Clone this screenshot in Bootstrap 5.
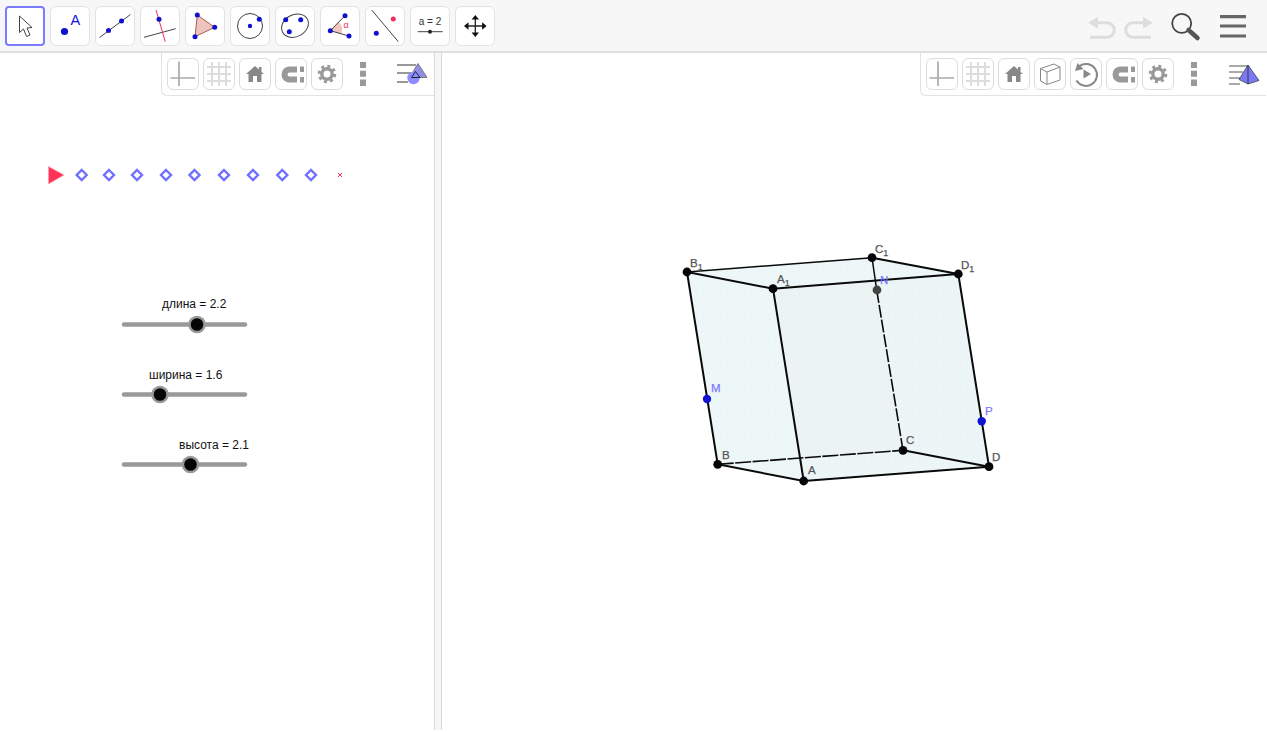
<!DOCTYPE html>
<html lang="ru">
<head>
    <meta charset="UTF-8">
    <meta name="viewport" content="width=device-width, initial-scale=1.0">
    <title>GeoGebra</title>
    <link href="https://cdn.jsdelivr.net/npm/bootstrap@5.3.0/dist/css/bootstrap.min.css" rel="stylesheet">
    <style>
        html, body { height: 100%; overflow: hidden; background: #fff; font-family: "Liberation Sans", Arial, sans-serif; }
        .gg-toolbar { height: 53px; padding: 6px 15px 0 5px; background: #f7f7f7; border-bottom: 2px solid #dfdfdf; }
        .gg-tools { gap: 5px; }
        .gg-tool { width: 40px; height: 40px; padding: 0; background: #fff; border: 1px solid #e3e3e3; border-radius: 6px; }
        .gg-tool:hover { background: #fff; border-color: #e3e3e3; }
        .gg-tool.gg-active, .gg-tool.gg-active:hover { border: 2px solid #7b7bff; border-radius: 4px; }
        .gg-tool svg, .gg-mini svg { display: block; }
        .gg-plain { width: 34px; height: 40px; }
        .gg-redo { margin-left: 2px; }
        .gg-plain-wide { width: 40px; height: 40px; }
        .gg-main { height: 677px; margin-right: 1px; }
        .gg-left { width: 434px; }
        .gg-split { width: 8px; background: #f6f6f6; border-left: 1px solid #d9d9d9; border-right: 1px solid #d9d9d9; }
        .gg-stylebar { top: 0; right: 0; height: 43px; padding: 5px 6px 0 5px; background: #fff; border-left: 1px solid #e0e4e4; border-bottom: 1px solid #e0e4e4; border-bottom-left-radius: 6px; }
        .gg-mini { width: 32px; height: 32px; padding: 0; background: #fff; border: 1px solid #dcdcdc; border-radius: 6px; flex: none; }
        .gg-mini:hover { background: #fff; border-color: #dcdcdc; }
        .gg-bare { width: 32px; height: 32px; flex: none; }
        .gg-menu { margin-left: 13px; }
        .gg-menu-3d { margin-left: 14px; }
        .gg-canvas { display: block; width: 100%; height: 100%; }
        .gg-canvas text { font-family: "Liberation Sans", Arial, sans-serif; font-size: 12px; }
        .gg-canvas .gg-lab { fill: #555; font-size: 11.5px; font-weight: 400; stroke: #555; stroke-width: .25px; }
        .gg-canvas .gg-lab-sub { font-size: 9px; }
        .gg-canvas .gg-lab-blue { fill: #7a7aff; stroke: #7a7aff; }
    </style>
</head>
<body>
    <!-- значки панели стилей -->
    <svg class="d-none" xmlns="http://www.w3.org/2000/svg">
        <symbol id="i-axes" viewBox="0 0 30 30"><path d="M11 2.5V27M2.5 19H27" stroke="#aaa" stroke-width="1.7" fill="none"/></symbol>
        <symbol id="i-grid" viewBox="0 0 30 30"><path d="M8 3V27M15 3V27M22 3V27M3 8H27M3 15H27M3 22H27" stroke="#ddd" stroke-width="2" fill="none"/></symbol>
        <symbol id="i-home" viewBox="0 0 30 30"><path d="M6 15L15 7L19 10.5V8H21.5V13L24 15H21.5V23H17V17H13V23H8.5V15Z" fill="#888"/></symbol>
        <symbol id="i-magnet" viewBox="0 0 30 30"><path d="M21 10.5H13.5A5 5 0 0 0 13.5 20.5H21" stroke="#999" stroke-width="6" fill="none"/><path d="M24 7.5H28V13H24ZM24 18H28V23.5H24Z" fill="#999"/></symbol>
        <symbol id="i-gear" viewBox="0 0 30 30"><circle cx="15" cy="15" r="5.2" stroke="#999" stroke-width="3.4" fill="none"/><circle cx="15" cy="15" r="7.8" stroke="#999" stroke-width="3" fill="none" stroke-dasharray="3 3.13"/></symbol>
        <symbol id="i-dots" viewBox="0 0 32 32"><path d="M13 4H19V10H13ZM13 12.7H19V18.7H13ZM13 21.4H19V28H13Z" fill="#999"/></symbol>
    </svg>

    <!-- Панель инструментов -->
    <div class="gg-toolbar d-flex">
        <div class="d-flex gg-tools">
            <button class="btn gg-tool gg-active"><svg width="36" height="36" viewBox="2 2 36 36"><path d="M14.5 10V26.5L18.5 23L21.5 30.5L25 29L22 22L27 21.5Z" fill="#fff" stroke="#444" stroke-width="1"/></svg></button>
            <button class="btn gg-tool"><svg width="38" height="38" viewBox="1 1 38 38"><circle cx="14.5" cy="25.5" r="3.6" fill="#1010d0"/><text x="20.5" y="19.3" font-size="14.5" fill="#1414e0" font-family="Liberation Sans">A</text></svg></button>
            <button class="btn gg-tool"><svg width="38" height="38" viewBox="1 1 38 38"><path d="M4.5 31.5L35.5 8.5" stroke="#444" stroke-width="1"/><circle cx="13.5" cy="24.5" r="2.5" fill="#1010d0"/><circle cx="26.5" cy="15" r="2.5" fill="#1010d0"/></svg></button>
            <button class="btn gg-tool"><svg width="38" height="38" viewBox="1 1 38 38"><path d="M4 31.3L35.7 22.7" stroke="#444" stroke-width="1"/><path d="M16 4L25.3 35.7" stroke="#f0305a" stroke-width="1"/><circle cx="19" cy="13.3" r="2.5" fill="#1010d0"/></svg></button>
            <button class="btn gg-tool"><svg width="38" height="38" viewBox="1 1 38 38"><path d="M12.3 9L29.7 21.3L10 30.7Z" fill="#efc4be" stroke="#a85c50" stroke-width="1"/><circle cx="12.3" cy="9" r="2.5" fill="#1010d0"/><circle cx="29.7" cy="21.3" r="2.5" fill="#1010d0"/><circle cx="10" cy="30.7" r="2.5" fill="#1010d0"/></svg></button>
            <button class="btn gg-tool"><svg width="38" height="38" viewBox="1 1 38 38"><circle cx="20" cy="20" r="12.5" fill="none" stroke="#444" stroke-width="1"/><circle cx="20" cy="20" r="2.2" fill="#1010d0"/><circle cx="29.3" cy="13.3" r="2.5" fill="#1010d0"/></svg></button>
            <button class="btn gg-tool"><svg width="38" height="38" viewBox="1 1 38 38"><ellipse cx="20" cy="19.7" rx="14" ry="11" transform="rotate(-28 20 19.7)" fill="none" stroke="#444" stroke-width="1"/><circle cx="10.7" cy="13.7" r="2.5" fill="#1010d0"/><circle cx="25.7" cy="13.7" r="2.5" fill="#1010d0"/><circle cx="14.3" cy="25.7" r="2.5" fill="#1010d0"/></svg></button>
            <button class="btn gg-tool"><svg width="38" height="38" viewBox="1 1 38 38"><path d="M10.3 24.7L18.5 15.6A12 12 0 0 1 21.5 27.9Z" fill="#f4c6c0"/><path d="M25 9.7L10.3 24.7L29 30" fill="none" stroke="#444" stroke-width="1"/><circle cx="25" cy="9.7" r="2.5" fill="#1010d0"/><circle cx="10.3" cy="24.7" r="2.5" fill="#1010d0"/><circle cx="29" cy="30" r="2.5" fill="#1010d0"/><text x="23.5" y="22" font-size="9" fill="#f0305a" font-family="Liberation Sans">α</text></svg></button>
            <button class="btn gg-tool"><svg width="38" height="38" viewBox="1 1 38 38"><path d="M6.7 4L33.3 35.7" stroke="#444" stroke-width="1"/><circle cx="28.3" cy="13" r="2.5" fill="#f0305a"/><circle cx="11.3" cy="27.3" r="2.5" fill="#1010d0"/></svg></button>
            <button class="btn gg-tool"><svg width="38" height="38" viewBox="1 1 38 38"><text x="20" y="19" text-anchor="middle" font-size="10" fill="#333" font-family="Liberation Sans">a = 2</text><path d="M7.7 25.7H32.7" stroke="#444" stroke-width="1"/><circle cx="20" cy="25.7" r="2" fill="#222"/></svg></button>
            <button class="btn gg-tool"><svg width="38" height="38" viewBox="1 1 38 38"><path d="M20.3 11V29M11.5 20H29" stroke="#222" stroke-width="1.3"/><path d="M20.3 9L24 13.5H16.6ZM20.3 31L24 26.5H16.6ZM9 20L13.5 16.3V23.7ZM31.6 20L27.1 16.3V23.7Z" fill="#111"/></svg></button>
        </div>
        <div class="d-flex ms-auto">
            <div class="gg-plain"><svg width="34" height="40" viewBox="1086 6 34 40"><path d="M1088.3 22.7L1098 16.7V28.7Z" fill="#ddd"/><path d="M1097 22.7H1107A7.3 7.3 0 0 1 1107 37.3H1090" stroke="#ddd" stroke-width="3" fill="none"/></svg></div>
            <div class="gg-plain gg-redo"><svg width="34" height="40" viewBox="1122 6 34 40"><path d="M1152.7 22.7L1143 16.7V28.7Z" fill="#ddd"/><path d="M1144 22.7H1133A7.3 7.3 0 0 0 1133 37.3H1151" stroke="#ddd" stroke-width="3" fill="none"/></svg></div>
            <div class="gg-plain-wide ms-2"><svg width="40" height="40" viewBox="1164 6 40 40"><circle cx="1181.7" cy="23.3" r="9.5" fill="none" stroke="#444" stroke-width="1.8"/><path d="M1188.5 30L1197.5 38" stroke="#555" stroke-width="4.5" stroke-linecap="round"/></svg></div>
            <div class="gg-plain-wide ms-2"><svg width="40" height="40" viewBox="1212 6 40 40"><path d="M1220 16.7H1246M1220 26H1246M1220 36H1246" stroke="#666" stroke-width="3.2"/></svg></div>
        </div>
    </div>

    <div class="gg-main d-flex">
        <!-- Панель алгебры -->
        <div class="gg-left position-relative">
            <div class="gg-stylebar position-absolute d-flex gap-1">
                <button class="btn gg-mini"><svg width="30" height="30"><use href="#i-axes"/></svg></button>
                <button class="btn gg-mini"><svg width="30" height="30"><use href="#i-grid"/></svg></button>
                <button class="btn gg-mini"><svg width="30" height="30"><use href="#i-home"/></svg></button>
                <button class="btn gg-mini"><svg width="30" height="30"><use href="#i-magnet"/></svg></button>
                <button class="btn gg-mini"><svg width="30" height="30"><use href="#i-gear"/></svg></button>
                <div class="gg-bare"><svg width="32" height="32"><use href="#i-dots"/></svg></div>
                <div class="gg-bare gg-menu"><svg width="32" height="32" viewBox="0 0 32 32"><path d="M1 7H20M1 15H15M1 24H12" stroke="#999" stroke-width="1.8"/><path d="M22 5.5L31 19.5H13.5Z" fill="#8f8fe8" stroke="#666" stroke-width=".8"/><circle cx="17.5" cy="20" r="6.2" fill="#8c8cff"/><path d="M19.5 13.5L24 19.5H15.5Z" fill="none" stroke="#223" stroke-width="1"/></svg></div>
            </div>
            <svg class="gg-canvas" viewBox="0 53 434 677">
                <path d="M48.5 166.5L64 175L48.5 184Z" fill="#ff3358" stroke="#ffa0b0" stroke-width=".8"/>
                <g fill="none" stroke="#7070ff" stroke-width="2.4">
                    <path d="M81.7 170L86.7 175L81.7 180L76.7 175Z"/>
                    <path d="M109 170L114 175L109 180L104 175Z"/>
                    <path d="M137 170L142 175L137 180L132 175Z"/>
                    <path d="M166 170L171 175L166 180L161 175Z"/>
                    <path d="M194.5 170L199.5 175L194.5 180L189.5 175Z"/>
                    <path d="M224 170L229 175L224 180L219 175Z"/>
                    <path d="M253 170L258 175L253 180L248 175Z"/>
                    <path d="M282.3 170L287.3 175L282.3 180L277.3 175Z"/>
                    <path d="M311 170L316 175L311 180L306 175Z"/>
                </g>
                <path d="M338 173L342 177M342 173L338 177" stroke="#ff3358" stroke-width="1"/>

                <text x="162" y="308" fill="#111">длина = 2.2</text>
                <path d="M124 324.5H245" stroke="#999" stroke-width="4.4" stroke-linecap="round"/>
                <circle cx="197" cy="324.5" r="8.8" fill="#999"/><circle cx="197" cy="324.5" r="6.3" fill="#050505"/>

                <text x="149" y="379" fill="#111">ширина = 1.6</text>
                <path d="M124 394.5H245" stroke="#999" stroke-width="4.4" stroke-linecap="round"/>
                <circle cx="160" cy="394.5" r="8.8" fill="#999"/><circle cx="160" cy="394.5" r="6.3" fill="#050505"/>

                <text x="179" y="449" fill="#111">высота = 2.1</text>
                <path d="M124 464.5H245" stroke="#999" stroke-width="4.4" stroke-linecap="round"/>
                <circle cx="190.5" cy="464.5" r="8.8" fill="#999"/><circle cx="190.5" cy="464.5" r="6.3" fill="#050505"/>
            </svg>
        </div>

        <div class="gg-split"></div>

        <!-- Окно 3D -->
        <div class="flex-grow-1 position-relative">
            <div class="gg-stylebar position-absolute d-flex gap-1">
                <button class="btn gg-mini"><svg width="30" height="30"><use href="#i-axes"/></svg></button>
                <button class="btn gg-mini"><svg width="30" height="30"><use href="#i-grid"/></svg></button>
                <button class="btn gg-mini"><svg width="30" height="30"><use href="#i-home"/></svg></button>
                <button class="btn gg-mini"><svg width="30" height="30"><path d="M5.5 9.5L19 5L25 8V21L12 25.5L5.5 22ZM5.5 9.5L12 13L25 8M12 13V25.5" fill="none" stroke="#888" stroke-width="1"/></svg></button>
                <button class="btn gg-mini"><svg width="30" height="30"><path d="M9 6.5A11 11 0 1 1 6 21" transform="translate(-.5 .5)" fill="none" stroke="#888" stroke-width="2"/><path d="M4 12L6.5 4L12.5 10Z" fill="#888"/><path d="M12.5 10.5L20 15L12.5 19.5Z" fill="#888"/></svg></button>
                <button class="btn gg-mini"><svg width="30" height="30"><use href="#i-magnet"/></svg></button>
                <button class="btn gg-mini"><svg width="30" height="30"><use href="#i-gear"/></svg></button>
                <div class="gg-bare"><svg width="32" height="32"><use href="#i-dots"/></svg></div>
                <div class="gg-bare gg-menu-3d"><svg width="32" height="32" viewBox="0 0 32 32"><path d="M1 8H20M1 14H15M1 20H12M1 26H12" stroke="#aaa" stroke-width="1.8"/><path d="M20 7L31 22.5L20 26L11 21.5Z" fill="#7a7af5" stroke="#444" stroke-width=".8"/><path d="M20 7V26" stroke="#335" stroke-width="1"/></svg></div>
            </div>
            <svg class="gg-canvas" viewBox="442 53 824 677">
                <defs>
                    <pattern id="gg-dots" width="6" height="6" patternUnits="userSpaceOnUse"><rect x="1" y="1" width="1" height="1" fill="#dfe9e9"/></pattern>
                </defs>
                <path d="M687 272L872 257.7L958.3 274L989 466.7L803.7 481L717.7 464.3Z" fill="#eef7f8"/>
                <path d="M773 288.7L958.3 274L989 466.7L803.7 481Z" fill="#edf6f6"/>
                <path d="M773 288.7L876 281L903 450.3L801 458Z" fill="#ecf3f3"/>
                <path d="M687 272L872 257.7L958.3 274L989 466.7L803.7 481L717.7 464.3Z" fill="url(#gg-dots)" opacity=".6"/>

                <g stroke="#0a0a0a" fill="none">
                    <path d="M687 272L872 257.7" stroke-width="1.5"/>
                    <path d="M717.7 464.3L903 450.3" stroke-width="1.6" stroke-dasharray="16 1.5"/>
                    <path d="M876.7 290L903 450.3" stroke-width="1.6" stroke-dasharray="13 2"/>
                    <path d="M872 257.7L876.7 290" stroke-width="1.5"/>
                    <path d="M687 272L773 288.7L958.3 274L872 257.7" stroke-width="2"/>
                    <path d="M773 288.7L803.7 481M687 272L717.7 464.3M958.3 274L989 466.7" stroke-width="2"/>
                    <path d="M717.7 464.3L803.7 481L989 466.7L903 450.3" stroke-width="2"/>
                </g>

                <g fill="#050505">
                    <circle cx="687" cy="272" r="4.4"/><circle cx="872" cy="257.7" r="4.4"/><circle cx="958.3" cy="274" r="4.4"/><circle cx="773" cy="288.7" r="4.4"/>
                    <circle cx="717.7" cy="464.3" r="4.4"/><circle cx="803.7" cy="481" r="4.4"/><circle cx="903" cy="450.3" r="4.4"/><circle cx="989" cy="466.7" r="4.4"/>
                </g>
                <circle cx="877" cy="290" r="4.4" fill="#444"/>
                <circle cx="707" cy="399" r="4.2" fill="#1212d2"/>
                <circle cx="981.7" cy="421.3" r="4.2" fill="#1212d2"/>

                <text class="gg-lab" x="690" y="267">B<tspan class="gg-lab-sub" dy="3">1</tspan></text>
                <text class="gg-lab" x="875" y="253">C<tspan class="gg-lab-sub" dy="3">1</tspan></text>
                <text class="gg-lab" x="961" y="269">D<tspan class="gg-lab-sub" dy="3">1</tspan></text>
                <text class="gg-lab" x="777" y="283">A<tspan class="gg-lab-sub" dy="3">1</tspan></text>
                <text class="gg-lab gg-lab-blue" x="880" y="284">N</text>
                <text class="gg-lab gg-lab-blue" x="711" y="392">M</text>
                <text class="gg-lab gg-lab-blue" x="985" y="415">P</text>
                <text class="gg-lab" x="722" y="459">B</text>
                <text class="gg-lab" x="808" y="474">A</text>
                <text class="gg-lab" x="906" y="444">C</text>
                <text class="gg-lab" x="992" y="461">D</text>
            </svg>
        </div>
    </div>

    <script src="https://cdn.jsdelivr.net/npm/bootstrap@5.3.0/dist/js/bootstrap.bundle.min.js"></script>
</body>
</html>
